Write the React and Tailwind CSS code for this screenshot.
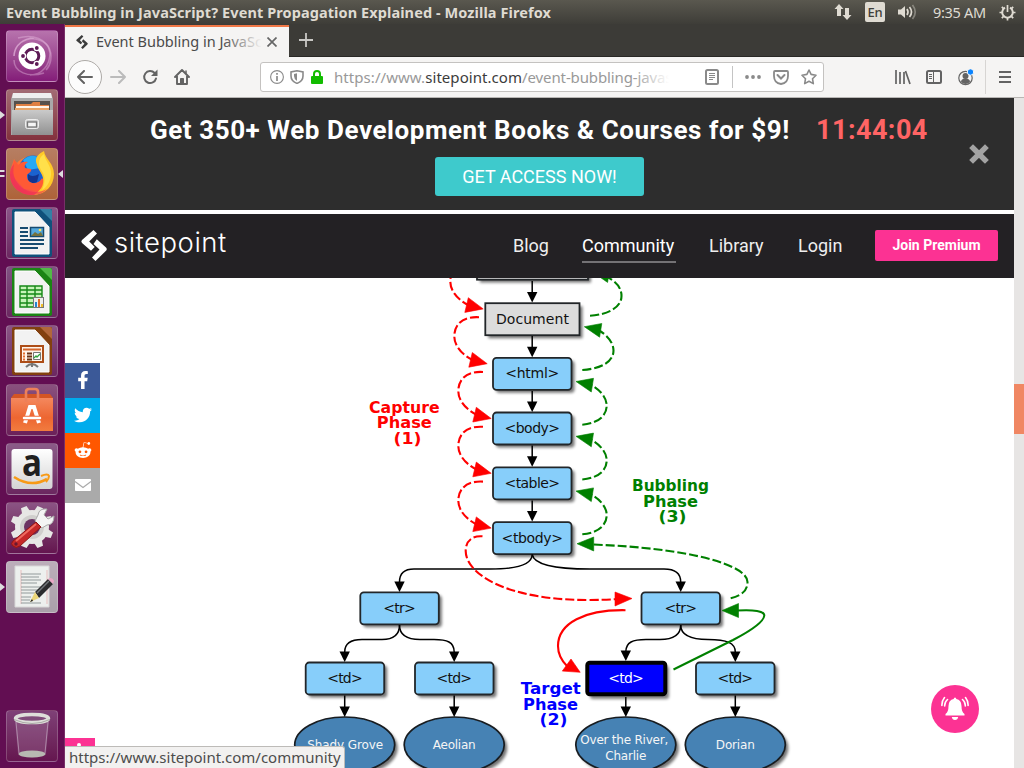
import React from "react";
import { FaFacebookF, FaTwitter, FaRedditAlien } from "react-icons/fa";

/* ---------- Desktop panel ---------- */

function TopPanel() {
  return (
    <header className="flex h-6 shrink-0 items-center justify-between bg-linear-to-b from-[#5a584f] to-[#3e3d38] pl-[6px] pr-2 text-[#dfdbd2]">
      <div className="whitespace-nowrap text-[14.500px] font-bold leading-6 tracking-[0.090px]">
        Event Bubbling in JavaScript? Event Propagation Explained - Mozilla Firefox
      </div>
      <div className="flex h-6 items-center">
        <svg width="18" height="16" viewBox="0 0 18 16" fill="currentColor">
          <path d="M5 0 9.500 5H7v7H3V5H.5zM13 16 8.500 11H11V4h4v7h2.500z" />
        </svg>
        <span className="ml-[13px] flex h-5 w-5 items-center justify-center rounded-[2px] bg-[#dfdbd2] pt-px text-[13px] font-medium tracking-[-0.300px] text-[#3f3e39]">En</span>
        <svg className="ml-[12px]" width="21" height="16" viewBox="0 0 21 16" fill="none" stroke="currentColor" strokeWidth="1.700">
          <path d="M1 5.500h3L8 2v12L4 10.500H1z" fill="currentColor" stroke="none" />
          <path d="M10 5q2 3 0 6" />
          <path d="M12.500 3q4 5 0 10" />
          <path d="M15.500 1q5.500 7 0 14" opacity=".4" />
        </svg>
        <span className="ml-[15px] w-[55px] whitespace-nowrap text-[14.500px] leading-6 tracking-[-0.300px]">9:35 AM</span>
        <svg className="ml-[11px]" width="17" height="17" viewBox="0 0 17 17" fill="none" stroke="currentColor" strokeWidth="2">
          <path d="M6 3.700a5.300 5.300 0 1 0 5 0" />
          <path d="M8.500 1v7M.5 8.500h2.500M14 8.500h2.500M8.500 14v2.500M2.800 14.200l1.800-1.800M12.400 12.400l1.800 1.800M2.800 2.800l1.800 1.800M14.200 2.800l-1.800 1.800" strokeWidth="1.700" />
        </svg>
      </div>
    </header>
  );
}

/* ---------- Launcher ---------- */

function UbuntuIcon() {
  return (
    <g>
      <g fill="none" stroke="#eac0e4" strokeOpacity=".4" strokeWidth="1.500">
        <path d="M8 26C8 10 30 2 42 16c6 10 2 20-2 24" />
        <path d="M12 8c14-4 30 0 32 15 0 12-8 22-20 22M8 30c0 12 14 18 30 13M8 26c1-12 10-18 20-18" />
      </g>
      <circle cx="26" cy="26" r="13.500" fill="#fff" />
      <circle cx="26" cy="26" r="6.800" fill="none" stroke="#5d1a55" strokeWidth="3" />
      <g stroke="#fff" strokeWidth="1.400" fill="#5d1a55">
        <circle cx="17" cy="26" r="2.600" />
        <circle cx="30.800" cy="18" r="2.600" />
        <circle cx="30.800" cy="34" r="2.600" />
      </g>
    </g>
  );
}

function FilesIcon() {
  return (
    <g>
      <path d="M7 4h38l2 6v36H5V10z" fill="#a9a9a9" />
      <path d="M7 4h38l1 5H6z" fill="#efefef" />
      <path d="M8 12h36v10H8z" fill="#55504c" />
      <path d="M10 15h15l2-2h7v3h9v6H9z" fill="#e07f42" />
      <path d="M10 17h33v2H10z" fill="#fff4e8" />
      <path d="M9 19h34v2H9z" fill="#e8a467" />
      <path d="M6 21h41v25H6z" fill="url(#steel)" />
      <rect x="19.500" y="30.500" width="13" height="9" rx="2" fill="#ccc" stroke="#eee" />
      <rect x="21.500" y="33" width="9" height="5" fill="#f5f5f5" stroke="#777" strokeWidth="1.300" />
    </g>
  );
}

function FirefoxIcon() {
  return (
    <g>
      <path d="M8 11c1 2 2 3 3 4 8-9 24-9 32-1 8 11 5 33-17 33C13 47 4 38 4 27c0-8 3-11 4-16z" fill="url(#fox)" />
      <circle cx="27" cy="21.500" r="14" fill="#1b62cf" />
      <path d="M17 12q9-8 19-1l-2 9-12 2z" fill="#26a9f4" />
      <path d="M22 26q4 4 11 0l-2 8q-6 3-9-2z" fill="#14348f" />
      <path d="M8 12c2 1 3 3 4 5 3-3 6-4 10-3-3 2-4 4-3 6l6 1c1 3-3 4-4 6 0 2 0 5 3 7 5 3 10 0 12-4l5 6-8 7-15-2L9 31 6 23z" fill="#ff5a35" />
      <path d="M31 17c-3-7 1-11 7-14 1 8 10 12 10 23 0 12-9 20-20 21 9-6 11-13 8-20-2-4-4-6-5-10z" fill="#ffc928" />
      <path d="M33 15c0-4 2-7 5-9 1 7 8 12 7 21-1 7-4 12-9 15 4-9 3-15-1-20-1-2-2-4-2-7z" fill="#ffe04a" />
      <path d="M4 27c1 12 11 20 22 20 7 0 12-3 15-6-11 6-26 3-32-10-2-4-2-9-1-15-3 3-4 7-4 11z" fill="#ee3056" opacity=".65" />
    </g>
  );
}

function OfficePage({ dark, light, children }) {
  return (
    <g>
      <path d="M8 2h36q2 0 2 2v44q0 2-2 2H8q-2 0-2-2V4q0-2 2-2z" fill={dark} />
      <path d="M9 5h20l14 15v27H9z" fill="#f2f2f2" stroke="#fff" />
      <path d="M32 2h12q2 0 2 2v14L32 4z" fill={dark} />
      <path d="M34 2h10q2 0 2 2v10z" fill={light} />
      {children}
    </g>
  );
}

function WriterIcon() {
  return (
    <OfficePage dark="#10517b" light="#3380a5">
      <path d="M14 21h8M14 25h8M14 29h8M14 33h24M14 37h24M14 41h18" stroke="#174b70" strokeWidth="1.800" />
      <rect x="24.500" y="20.500" width="13" height="9" fill="#54a9dd" stroke="#174b70" strokeWidth="1.500" />
      <path d="m25 29 4-4 3 2 3-2 2 4z" fill="#75713c" />
      <circle cx="34" cy="23" r="1.300" fill="#ffe454" />
    </OfficePage>
  );
}

function CalcIcon() {
  return (
    <OfficePage dark="#1b8414" light="#51b947">
      <path d="M14 20h22v21H14z" fill="#c7f4b9" />
      <path d="M14 20h22v21H14zM14 24h22M14 28h22M14 32h22M14 37h22M21 20v21M29 20v21" fill="none" stroke="#168817" strokeWidth="1.400" />
      <rect x="27.500" y="31.500" width="10" height="10" fill="#eee" stroke="#777" />
      <path d="M29 36h2v5h-2z" fill="#2684d0" />
      <path d="M32 33h2v8h-2z" fill="#e06b26" />
      <path d="M35 38h2v3h-2z" fill="#f0be2a" />
    </OfficePage>
  );
}

function ImpressIcon() {
  return (
    <OfficePage dark="#82400f" light="#b1673a">
      <path d="M20 42q6-6 12 0M26 37v5" stroke="#777" strokeWidth="2" fill="none" />
      <rect x="15" y="21" width="22" height="16" fill="#fff4e9" stroke="#ad4d17" strokeWidth="2" />
      <path d="M17 24.500h18" stroke="#d5672d" strokeWidth="2" />
      <path d="M17 28.500h2M17 31.500h2M17 34.500h2" stroke="#e36d2c" strokeWidth="2" />
      <path d="M21 28.500h5M21 31.500h5M21 34.500h5" stroke="#693516" strokeWidth="1.800" />
      <path d="M27.500 27.500h7v7h-7z" fill="#fff" stroke="#777" />
      <path d="m28 33 2-2 1 1 3-3" fill="none" stroke="#33a33e" strokeWidth="1.300" />
    </OfficePage>
  );
}

function SoftwareIcon() {
  return (
    <g>
      <path d="M5 14 8 10h36l3 4v33H5z" fill="#d45524" />
      <path d="M5 14h42v33H5z" fill="url(#bag)" />
      <path d="M20 18V8q0-3 3-3h6q3 0 3 3v10" fill="none" stroke="#ed8059" strokeWidth="2.600" />
      <path d="m19 39 5-16h4l5 16" fill="none" stroke="#fff" strokeWidth="4" />
      <path d="M17 34h18" stroke="#ef6a3a" strokeWidth="4.500" />
      <path d="M18 34h16" stroke="#fff" strokeWidth="2.500" strokeLinecap="round" />
    </g>
  );
}

function AmazonIcon() {
  return (
    <g>
      <rect x="5.500" y="6" width="41" height="40" rx="3" fill="url(#paper)" />
      <text x="26" y="33" textAnchor="middle" fontFamily="Open Sans, sans-serif" fontWeight="700" fontSize="38" textLength="20" lengthAdjust="spacingAndGlyphs" fill="#202020">a</text>
      <path d="M8 34q17 11 33 2" fill="none" stroke="#f79a16" strokeWidth="2.600" />
      <path d="M35 33q7-3 8 0 0 3-3 6" fill="none" stroke="#f79a16" strokeWidth="2" />
    </g>
  );
}

function SettingsIcon() {
  const teeth = [22.5, 67.5, 112.5, 157.5, 202.5, 247.5, 292.5, 337.5];
  return (
    <g>
      <g fill="#e7e7e5">
        {teeth.map((angle) => (
          <path key={angle} d="M21.500 11 23 3.500h6l1.500 7.500z" transform={`rotate(${angle} 26 25)`} />
        ))}
        <circle cx="26" cy="25" r="17" />
      </g>
      <circle cx="26" cy="25" r="12" fill="#d0cfcd" />
      <circle cx="26" cy="25" r="8" fill="#6b3262" />
      <path d="m29 19 7 7 5-3q7 0 7-9l-6 3-4-4 3-6q-8-1-9 6z" fill="#f4f4f4" stroke="#aaa" />
      <path d="m7 39 23-19 5 5-21 19q-4 3-7 0-3-2 0-5z" fill="#c62828" stroke="#8e1717" />
      <path d="M10 39 30 22" stroke="#ef6b60" strokeWidth="2" />
      <circle cx="10" cy="42" r="1.700" fill="#69192f" />
    </g>
  );
}

function EditorIcon() {
  return (
    <g>
      <path d="M9 5h34v41H9z" fill="#edf0ee" stroke="#d8d8d8" />
      <path d="M15 9v34M41 9v34" stroke="#e4a0a0" strokeWidth=".6" />
      <path d="M15 13h20M15 16h18M15 19h20M15 22h16M15 26h21M15 29h19M15 32h14M15 36h10M15 39h9M15 42h20" stroke="#929a9b" strokeWidth="1" />
      <path d="m29 31 13-13 5 5-14 14z" fill="#2b2c2e" />
      <path d="m29 31 4 6-9 4z" fill="#ecd779" />
      <path d="m42 18 2-1q3 0 4 3l-1 3z" fill="#e9a6c5" />
      <path d="m31 32 12-12" stroke="#72777b" strokeWidth="1.500" />
      <path d="m24 41 2-3 1 2z" fill="#222" />
    </g>
  );
}

function TrashIcon() {
  return (
    <g>
      <path d="m9 10 3 34q14 7 28 0l3-34z" fill="#d4bad3" fillOpacity=".18" />
      <path d="m10 12 3 31M42 12l-3 31" stroke="#ccb7cc" strokeOpacity=".6" />
      <ellipse cx="26" cy="44" rx="13.500" ry="3.500" fill="#b8b9b2" />
      <ellipse cx="26" cy="8.500" rx="16.500" ry="4" fill="#804c7a" stroke="#dededa" strokeWidth="3.500" />
      <path d="M8 9.500q18 8 36 0" fill="none" stroke="#aaa9a6" strokeWidth="1" />
    </g>
  );
}

const launcherApps = [
  { id: "dash", tile: "from-[#b773ad] to-[#841c79]", Icon: UbuntuIcon },
  { id: "files", tile: "from-[#a26b74] to-[#83313d]", Icon: FilesIcon, left: "one" },
  { id: "firefox", tile: "from-[#b67e62] to-[#ae6339]", Icon: FirefoxIcon, left: "two", right: true },
  { id: "writer", tile: "from-[#8a5587] to-[#6b2760]", Icon: WriterIcon },
  { id: "calc", tile: "from-[#805282] to-[#6b2760]", Icon: CalcIcon },
  { id: "impress", tile: "from-[#8a5685] to-[#6b2760]", Icon: ImpressIcon },
  { id: "software", tile: "from-[#89517e] to-[#6b2059]", Icon: SoftwareIcon },
  { id: "amazon", tile: "from-[#8b5b88] to-[#6b2760]", Icon: AmazonIcon },
  { id: "settings", tile: "from-[#8b5484] to-[#64154f]", Icon: SettingsIcon },
  { id: "editor", tile: "from-[#bcaeba] to-[#aaa0aa]", Icon: EditorIcon, left: "one" },
];

function LauncherTile({ app }) {
  const { Icon } = app;
  return (
    <div className={`relative size-[52px] shrink-0 rounded-[4px] border border-white/20 bg-linear-to-b ${app.tile}`}>
      <svg className="-ml-px -mt-px block" width="52" height="52" viewBox="0 0 52 52">
        <Icon />
      </svg>
      {app.left === "one" && (
        <svg className="absolute left-[-7px] top-5" width="6" height="10" viewBox="0 0 6 10">
          <path d="M0 1v8l5-4z" fill="#ddd" />
        </svg>
      )}
      {app.left === "two" && (
        <svg className="absolute left-[-7px] top-5" width="6" height="10" viewBox="0 0 6 10">
          <path d="M0 1h4l1 1-1 1H0zM0 6h4l1 1-1 1H0z" fill="#ddd" />
        </svg>
      )}
      {app.right && (
        <svg className="absolute right-[-7px] top-5" width="6" height="10" viewBox="0 0 6 10">
          <path d="M5 1v8L0 5z" fill="#ddd" />
        </svg>
      )}
    </div>
  );
}

function Launcher() {
  return (
    <aside className="flex w-[65px] shrink-0 flex-col justify-between border-r border-[#783068] bg-[#620e52] pb-[6px] pl-[6px] pt-[6px]">
      <svg className="absolute" width="0" height="0">
        <defs>
          <linearGradient id="steel" x1="0" y1="0" x2="0" y2="1"><stop stopColor="#cacaca" /><stop offset="1" stopColor="#919191" /></linearGradient>
          <linearGradient id="fox" x1="1" y1="0" x2="0" y2="1"><stop stopColor="#ffc629" /><stop offset=".55" stopColor="#ff6838" /><stop offset="1" stopColor="#ea226b" /></linearGradient>
          <linearGradient id="bag" x1="0" y1="0" x2="0" y2="1"><stop stopColor="#f4885e" /><stop offset=".6" stopColor="#ed6631" /><stop offset="1" stopColor="#f17c3f" /></linearGradient>
          <linearGradient id="paper" x1="0" y1="0" x2="0" y2="1"><stop stopColor="#fff" /><stop offset="1" stopColor="#d4d4d4" /></linearGradient>
        </defs>
      </svg>
      <div className="flex flex-col gap-[7px]">
        {launcherApps.map((app) => <LauncherTile key={app.id} app={app} />)}
      </div>
      <LauncherTile app={{ tile: "from-[#7f4077] to-[#65164f]", Icon: TrashIcon }} />
    </aside>
  );
}

/* ---------- Browser chrome ---------- */

function LogoMark({ className, width, height }) {
  return (
    <svg className={className} width={width} height={height} viewBox="0 0 26 31" fill="currentColor">
      <path d="M12.500 0 16 3.500 8.200 11.500 13.700 17 10 20.700 1.300 13.200Q-.6 11.500 1.300 9.700zM15.800 9.300 25 17.600Q26.500 19.200 25 20.800L14.500 31 11 27.500l7.500-8-6-5.600z" />
    </svg>
  );
}

function TabStrip() {
  return (
    <div className="flex h-[33px] shrink-0 border-b border-[#292825] bg-[#3c3b37]">
      <div className="-mb-px mt-px flex w-[224px] items-center border-t-2 border-[#f07746] bg-[#f5f4f3] pl-[11px]">
        <LogoMark className="text-[#3b3b3b]" width="12" height="14" />
        <div className="relative ml-[8px] mt-[-2px] w-[166px] overflow-hidden whitespace-nowrap text-[14.500px] leading-[28px] text-[#4a4a4a]">
          Event Bubbling in JavaScript?
          <div className="absolute inset-y-0 right-0 w-10 bg-linear-to-r from-transparent to-[#f5f4f3]" />
        </div>
        <svg className="ml-[5px]" width="10" height="10" viewBox="0 0 10 10" stroke="#666" strokeWidth="1.700"><path d="m.5.5 9 9M9.500.5l-9 9" /></svg>
      </div>
      <svg className="ml-[10px] mt-[9px]" width="14" height="14" viewBox="0 0 14 14" stroke="#c9c8c5" strokeWidth="1.800"><path d="M7 0v14M0 7h14" /></svg>
    </div>
  );
}

function AddressBar() {
  return (
    <div className="ml-[70px] flex h-[30px] w-[564px] items-center rounded-[3px] border border-[#c4c2c0] bg-white pl-[9px] pr-[6px] text-[#8a8a8a]">
      <svg width="14" height="14" viewBox="0 0 14 14" fill="none" stroke="currentColor"><circle cx="7" cy="7" r="6.400" strokeWidth="1.100" /><path d="M7 6v5M7 3v1.700" strokeWidth="1.700" /></svg>
      <svg className="ml-[6px]" width="14" height="14" viewBox="0 0 14 14" fill="none" stroke="currentColor"><path d="M7 .8 13 2v4q0 5-6 7.400Q1 11 1 6V2z" strokeWidth="1.600" /><path d="M7 3.300 4 4v2q0 3 3 5z" fill="currentColor" stroke="none" /></svg>
      <svg className="ml-[7px]" width="12" height="14" viewBox="0 0 12 14"><path d="M3 7V4q0-3 3-3t3 3v3" fill="none" stroke="#12bc00" strokeWidth="2" /><rect y="6" width="12" height="8" rx="1" fill="#12bc00" /></svg>
      <div className="relative ml-[11px] w-[335px] overflow-hidden whitespace-nowrap text-[15px] leading-7 tracking-[0.060px] text-[#999]">
        https://www.<span className="text-[#3c3c3c]">sitepoint.com</span><span className="tracking-[-0.120px]">/event-bubbling-javascript/</span>
        <div className="absolute inset-y-0 right-0 w-9 bg-linear-to-r from-transparent to-white" />
      </div>
      <svg className="ml-[36px]" width="14" height="16" viewBox="0 0 14 16" fill="none" stroke="currentColor"><rect x="1" y="1" width="12" height="14" rx="1.500" strokeWidth="2" /><path d="M4 4.500h6M4 6.500h6M4 8.500h6M4 10.500h4" strokeWidth="1" /></svg>
      <div className="ml-[13px] h-[22px] w-px bg-[#c4c4c4]" />
      <svg className="ml-[12px]" width="16" height="4" viewBox="0 0 16 4" fill="currentColor"><circle cx="2" cy="2" r="1.900" /><circle cx="8" cy="2" r="1.900" /><circle cx="14" cy="2" r="1.900" /></svg>
      <svg className="ml-[12px]" width="16" height="15" viewBox="0 0 16 15" fill="none" stroke="currentColor" strokeWidth="1.800"><path d="M2 1h12q1 0 1 1v4q0 7-7 8Q1 13 1 6V2q0-1 1-1z" /><path d="m4.500 5 3.500 3.500L11.500 5" strokeWidth="2" strokeLinecap="round" /></svg>
      <svg className="ml-[12px]" width="16" height="16" viewBox="0 0 16 16" fill="none" stroke="currentColor" strokeWidth="1.600" strokeLinejoin="round"><path d="m8 1 2.100 4.400 4.900.8-3.500 3.500.8 4.900L8 12.300l-4.300 2.300.8-4.900L1 6.200l4.900-.8z" /></svg>
    </div>
  );
}

function Toolbar() {
  return (
    <div className="flex h-[41px] shrink-0 items-center border-b border-[#b8b6b4] bg-[#f5f4f3] pl-[3px] text-[#636363]">
      <div className="flex size-[34px] items-center justify-center rounded-full border border-[#adaaa7] bg-[#fcfcfc]">
        <svg width="16" height="14" viewBox="0 0 16 14" fill="none" stroke="currentColor" strokeWidth="2" strokeLinecap="round" strokeLinejoin="round"><path d="M15 7H1M7 1 1 7l6 6" /></svg>
      </div>
      <svg className="ml-[8px] text-[#bbb]" width="16" height="14" viewBox="0 0 16 14" fill="none" stroke="currentColor" strokeWidth="2" strokeLinecap="round" strokeLinejoin="round"><path d="M1 7h14M9 1l6 6-6 6" /></svg>
      <svg className="ml-[16px]" width="17" height="16" viewBox="0 0 17 16"><path d="M14 9.500A6 6 0 1 1 12.600 4" fill="none" stroke="currentColor" strokeWidth="2" strokeLinecap="round" /><path d="M15.500.5V7H9z" fill="currentColor" /></svg>
      <svg className="ml-[15px]" width="16" height="16" viewBox="0 0 16 16" fill="none" stroke="currentColor" strokeWidth="1.900" strokeLinecap="round" strokeLinejoin="round"><path d="m1 8 7-7 7 7M3 7v8h10V7" /><path d="M6.500 14.500v-5h3v5z" fill="currentColor" strokeWidth="1" /><path d="M12 2v2" strokeWidth="1.500" /></svg>
      <AddressBar />
      <svg className="ml-[70px]" width="17" height="15" viewBox="0 0 17 15" fill="none" stroke="currentColor"><path d="M2 0v14M6 2v12M10 2v12M11.500 1l4.500 13" strokeWidth="1.700" /></svg>
      <svg className="ml-[15px]" width="16" height="14" viewBox="0 0 16 14" fill="none" stroke="currentColor"><rect x="1" y="1" width="14" height="12" rx="1.500" strokeWidth="2" /><path d="M7.500 1v12M3 4.500h3M3 6.500h3M3 8.500h3" strokeWidth="1" /></svg>
      <svg className="ml-[16px]" width="17" height="17" viewBox="0 0 17 17" fill="none" stroke="currentColor"><circle cx="7.500" cy="9" r="6.700" strokeWidth="1.200" /><circle cx="7.500" cy="7" r="3" fill="currentColor" stroke="none" /><path d="M3 13q0-3.500 4.500-3.500T12 13q-4.500 4-9 0z" fill="currentColor" stroke="none" /><circle cx="12.500" cy="3" r="3.200" fill="#0a84ff" stroke="#f5f4f3" /></svg>
      <div className="ml-[10px] h-[34px] w-px bg-[#d7d5d3]" />
      <svg className="ml-[13px]" width="12" height="12" viewBox="0 0 12 12" stroke="currentColor" strokeWidth="2"><path d="M0 1h12M0 6h12M0 11h12" /></svg>
    </div>
  );
}

/* ---------- Page ---------- */

function Promo() {
  return (
    <section className="relative h-[112px] shrink-0 bg-[#2d2d2d] font-['Roboto',sans-serif]">
      <div className="flex h-[59px] whitespace-nowrap pl-[85px] pt-4 text-[26px] font-bold leading-8">
        <span className="w-[666px] tracking-[0.550px] text-white">Get 350+ Web Development Books &amp; Courses for $9!</span>
        <span className="text-[27px] tracking-[0.450px] text-[#ff6464]">11:44:04</span>
      </div>
      <button className="ml-[370px] flex h-[39px] w-[209px] items-center justify-center rounded-[3px] bg-[#3ecacc] text-[18px] text-white">GET ACCESS NOW!</button>
      <svg className="absolute left-[904px] top-[46px]" width="20" height="20" viewBox="0 0 20 20" stroke="#a3a3a3" strokeWidth="5.400" strokeLinecap="square"><path d="m4 4 12 12M16 4 4 16" /></svg>
    </section>
  );
}

function SiteNav() {
  return (
    <nav className="mt-1 flex h-16 shrink-0 items-center bg-[#232124] pb-[2px] pl-4 font-['Roboto',sans-serif] text-[18px] text-[#eee]">
      <LogoMark className="text-white" width="26" height="31" />
      <span className="mb-[6px] ml-[7px] w-[399px] font-['Inter',sans-serif] text-[27.500px] font-light leading-8 tracking-[0.500px] text-white">sitepoint</span>
      <a className="w-[69px]">Blog</a>
      <a className="h-[35px] w-[94px] border-b-2 border-[#747275] pt-[4px] leading-[27px] text-white">Community</a>
      <a className="ml-[33px] w-[89px]">Library</a>
      <a className="w-[77px]">Login</a>
      <button className="mt-px h-[31px] w-[123px] rounded-[2px] bg-[#fc3293] text-[14px] font-bold text-white">Join Premium</button>
    </nav>
  );
}

function TagBox({ x, y, w = 78.5, label, textWidth, fill = "#87cefa", radius = 3.5 }) {
  return (
    <g>
      <rect x={x + 3} y={y + 3} width={w} height="32" rx={radius} fill="#000" opacity=".55" filter="url(#soft)" />
      <rect x={x} y={y} width={w} height="32" rx={radius} fill={fill} stroke="#222629" strokeWidth="1.800" />
      <text x={x + w / 2} y={y + 20.4} textAnchor="middle" fontSize="14" textLength={textWidth} fill="#111">{label}</text>
    </g>
  );
}

function LeafNode({ cx, lines }) {
  return (
    <g>
      <ellipse cx={cx + 3} cy="748" rx="50" ry="28" fill="#000" opacity=".55" filter="url(#soft)" />
      <ellipse cx={cx} cy="745" rx="50" ry="28" fill="#4682b4" stroke="#181c20" strokeWidth="1.700" />
      {lines.map((line, i) => (
        <text key={line.text} x={cx + (line.dx || 0)} y={lines.length === 1 ? 749 : 744 + i * 16} textAnchor="middle" fontSize="12" textLength={line.width} fill="#f5f5f5">{line.text}</text>
      ))}
    </g>
  );
}

function DownHead({ x, tip }) {
  return <path d={`M${x - 5.2} ${tip - 10.5}h10.400L${x} ${tip}z`} fill="#000" />;
}

function PhaseLabel({ color, rows }) {
  return rows.map(([text, x, y, width]) => (
    <text key={text} x={x} y={y} textAnchor="middle" fontSize="15" fontWeight="700" textLength={width} lengthAdjust="spacingAndGlyphs" fill={color}>{text}</text>
  ));
}

const captureShifts = [[-8, -109.6], [-4, -54.8], [0, 0], [0, 54.8], [0, 109.6]];
const bubbleArcs = [
  "M590 315.700C609 314.500 621.500 307 621.500 296C621.500 287 615 281 607 277",
  "M582.300 370C603 368.500 613.500 361 613.500 350.500C613.500 342 606 334 598 330",
  "M582.300 424.700C600 423 606.700 414.500 606.700 405.500C606.700 397 599 389 591 385",
  "M582.300 479.500C600 477.800 606.700 469.300 606.700 460.300C606.700 451.800 599 443.800 591 439.800",
  "M582.300 534.300C600 532.600 606.700 524.100 606.700 515.100C606.700 506.600 599 498.600 591 494.600",
];
const bubbleTips = [[16.3, -109.6], [8.3, -54.8], [0, 0], [0, 54.8], [0, 109.6]];

function EventFlowDiagram() {
  return (
    <svg className="block" width="949" height="490" viewBox="65 278 949 490" fontFamily="'DejaVu Sans', sans-serif">
      <defs>
        <filter id="soft" x="-15%" y="-25%" width="130%" height="150%"><feGaussianBlur stdDeviation="1.500" /></filter>
      </defs>

      <rect x="480" y="251" width="111" height="31.500" fill="#000" opacity=".55" filter="url(#soft)" />
      <rect x="477" y="248" width="111" height="31.700" fill="#dcdcdc" stroke="#222629" strokeWidth="1.800" />
      <TagBox x={485.3} y={303.2} w={94.2} label="Document" textWidth="73" fill="#dcdcdc" radius={0} />
      <TagBox x={493} y={357.8} label="<html>" textWidth="54" />
      <TagBox x={493} y={412.5} label="<body>" textWidth="55.500" />
      <TagBox x={493} y={467.3} label="<table>" textWidth="55.500" />
      <TagBox x={493} y={522.1} label="<tbody>" textWidth="61.500" />
      <TagBox x={360.3} y={592.3} label="<tr>" textWidth="32.500" />
      <TagBox x={641.5} y={592.3} label="<tr>" textWidth="32.500" />
      <TagBox x={305.7} y={662.5} label="<td>" textWidth="35.500" />
      <TagBox x={415} y={662.5} label="<td>" textWidth="35.500" />
      <TagBox x={696} y={662.5} label="<td>" textWidth="35.500" />
      <rect x="590" y="666" width="79" height="33" rx="3" fill="#000" opacity=".5" filter="url(#soft)" />
      <rect x="587.300" y="662.800" width="78" height="31.500" rx="2.500" fill="#0000fe" stroke="#000" strokeWidth="4" />
      <text x="626" y="682.700" textAnchor="middle" fontSize="14" textLength="35.500" fill="#fff">&lt;td&gt;</text>

      <LeafNode cx={344.7} lines={[{ text: "Shady Grove", width: 76, dx: 0.5 }]} />
      <LeafNode cx={454.2} lines={[{ text: "Aeolian", width: 43 }]} />
      <LeafNode cx={625.8} lines={[{ text: "Over the River,", width: 88, dx: -1.5 }, { text: "Charlie", width: 41 }]} />
      <LeafNode cx={735.3} lines={[{ text: "Dorian", width: 39 }]} />

      <g fill="none" stroke="#000" strokeWidth="1.500">
        <path d="M532.200 281v12M532.200 336v12M532.200 391v12M532.200 445.500v12M532.200 500.500v12M344.700 695.500v12M454.200 695.500v12M625.800 697v11M735.300 695.500v12" />
        <path d="M532.200 554.500C532 565 515 569 490 569H414C404 569 399.500 574 399.500 582" />
        <path d="M532.200 554.500C534 565 556 569 590 569H664C676 569 680.700 574 680.700 582" />
        <path d="M399.500 625C399.500 635 393 639.500 382 639.500H362C350 639.500 344.700 644 344.700 652" />
        <path d="M399.500 625C399.500 635 406 639.500 420 639.500H434C447 639.500 454.200 642 454.200 652" />
        <path d="M680.700 625C680.700 635 674 639.500 660 639.500H646C633 639.500 625.800 642 625.800 652" />
        <path d="M680.700 625C680.700 635 690 639.500 708 639.500C727 639.500 735.300 643 735.300 652" />
      </g>
      {[302.5, 357.3, 412, 466.8, 521.6].map((tip) => <DownHead key={tip} x={532.2} tip={tip} />)}
      <DownHead x={399.5} tip={592} />
      <DownHead x={680.7} tip={592} />
      <DownHead x={344.7} tip={662} />
      <DownHead x={454.2} tip={662} />
      <DownHead x={625.8} tip={661} />
      <DownHead x={735.3} tip={662} />
      {[344.7, 454.2, 625.8, 735.3].map((x) => <DownHead key={x} x={x} tip={717} />)}

      <g fill="none" stroke="#f00" strokeWidth="2.100">
        {captureShifts.map(([dx, dy]) => (
          <g key={dy} transform={`translate(${dx} ${dy})`}>
            <path d="M483 372C467 371 458.300 379 458.300 391C458.300 400 465 409 477 415" strokeDasharray="9 3" />
            <path d="M476.300 407.300 491.200 418.500 472.800 422z" fill="#f00" strokeWidth=".6" />
          </g>
        ))}
        <path d="M482.500 536.300C472 535.500 465.700 541 465.700 551C465.700 574 507 600 587 600Q606 600 617 599" strokeDasharray="9 3" />
        <path d="M615 592v14l17-7.500z" fill="#f00" strokeWidth=".6" />
        <path d="M625.500 610.200C585 609.500 558 623 558 646C558 655 562 661 567 666" />
        <path d="m571 659 9.200 13.300-17.900-1.200z" fill="#f00" strokeWidth=".6" />
      </g>

      <g fill="none" stroke="#008000" strokeWidth="2.100">
        {bubbleArcs.map((d) => <path key={d} d={d} strokeDasharray="9 3" />)}
        {bubbleTips.map(([dx, dy]) => (
          <path key={dy} d="M576 381.500 593.500 378.300 591.300 392z" transform={`translate(${dx} ${dy})`} fill="#008000" strokeWidth=".6" />
        ))}
        <path d="M730.700 598.300C743 595 747.500 590 747.500 582C747.500 565 690 548 592 544.500" strokeDasharray="9 3" />
        <path d="M577 543.700 593.700 537v14z" fill="#008000" strokeWidth=".6" />
        <path d="M673.500 669.500 733 640C754 629 764 621 764.300 615.500C764.300 611 754 609.500 737 610.500" />
        <path d="m722 610.500 16.500-7v14z" fill="#008000" strokeWidth=".6" />
      </g>

      <PhaseLabel color="#f00" rows={[["Capture", 404.3, 412.8, 70.5], ["Phase", 404.3, 428, 55], ["(1)", 407.5, 443.8, 28]]} />
      <PhaseLabel color="#008000" rows={[["Bubbling", 670.5, 491, 77], ["Phase", 670.5, 506.5, 55], ["(3)", 672.5, 522, 28]]} />
      <PhaseLabel color="#0000fe" rows={[["Target", 550.8, 694, 60], ["Phase", 550.5, 710, 55], ["(2)", 553.5, 725, 28]]} />
    </svg>
  );
}

function ShareBar() {
  return (
    <div className="absolute left-0 top-[265px] flex w-[35px] flex-col text-white [&>a]:flex [&>a]:h-[35px] [&>a]:items-center [&>a]:justify-center">
      <a className="bg-[#3b5998] pb-px"><FaFacebookF size={18} /></a>
      <a className="bg-[#00aced] pb-px"><FaTwitter size={18} /></a>
      <a className="bg-[#ff5700] pb-px"><FaRedditAlien size={18} /></a>
      <a className="bg-[#aaa] pb-px">
        <svg width="16" height="12" viewBox="0 0 16 12"><rect width="16" height="12" rx=".8" fill="#fff" /><path d="m0 2.500 8 6 8-6" fill="none" stroke="#aaa" strokeWidth="1.200" /></svg>
      </a>
    </div>
  );
}

function NotificationBell() {
  return (
    <div className="absolute left-[866px] top-[587px] flex size-12 items-center justify-center rounded-full bg-[#fc3293]">
      <svg width="28" height="28" viewBox="0 0 28 28" fill="#fff">
        <path d="M12.700 4q0-1.500 1.300-1.500T15.300 4q5.200 1 5.200 7 0 6 3 8v1.500H4.500V19q3-2 3-8 0-6 5.200-7zM10.800 22h6.400q-.5 3-3.200 3t-3.200-3z" />
        <g fill="none" stroke="#fff" strokeWidth="1.600" strokeLinecap="round"><path d="M6.500 4.500Q3.500 7 3.700 11M3.500 2.500Q.7 6 .9 10.500M21.500 4.500q3 2.500 2.800 6.500M24.500 2.500q2.800 3.500 2.600 8" /></g>
      </svg>
    </div>
  );
}

function WebPage() {
  return (
    <main className="relative flex min-h-0 flex-1 overflow-hidden bg-white">
      <div className="flex w-[949px] shrink-0 flex-col">
        <Promo />
        <SiteNav />
        <EventFlowDiagram />
      </div>
      <div className="w-[10px] bg-[#e7e5e4] pt-[286px]"><div className="h-[50px] bg-[#f08763]" /></div>
      <ShareBar />
      <NotificationBell />
      <div className="absolute left-0 top-[640px] flex h-[30px] w-[30px] justify-center bg-[#fc3293] pt-[5px]"><div className="mr-[3px] size-1 rounded-full bg-white" /></div>
      <div className="absolute bottom-0 left-0 h-[22px] w-[280px] whitespace-nowrap rounded-tr-[3px] border-r border-t border-[#bdbbb8] bg-[#f2f1f0] pl-1 text-[15px] leading-[20px] tracking-[-0.010px] text-[#4c4c4c]">https://www.sitepoint.com/community</div>
    </main>
  );
}

export default function App() {
  return (
    <div className="flex h-[768px] w-[1024px] flex-col overflow-hidden font-['Noto_Sans','Open_Sans',sans-serif]">
      <TopPanel />
      <div className="flex min-h-0 flex-1">
        <Launcher />
        <div className="flex w-[959px] flex-col">
          <TabStrip />
          <Toolbar />
          <WebPage />
        </div>
      </div>
    </div>
  );
}
